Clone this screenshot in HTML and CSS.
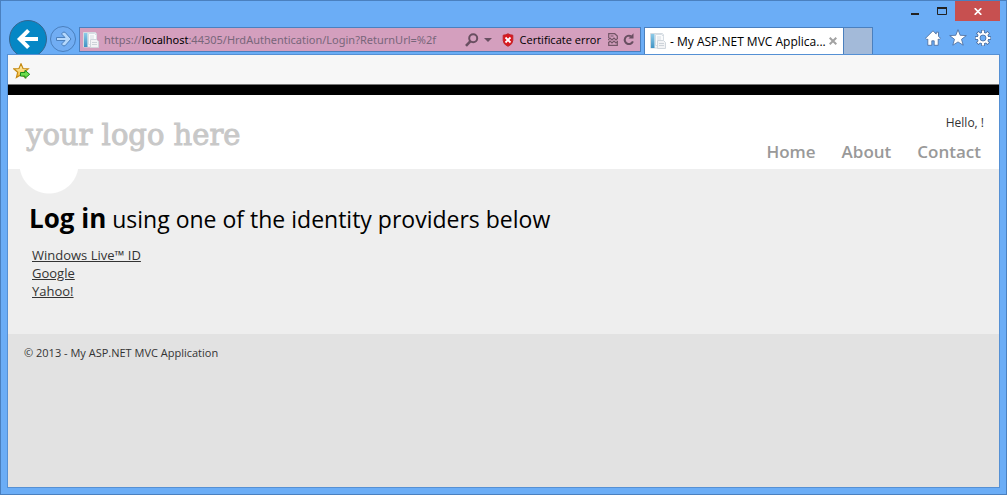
FILE: index.html
```
<!DOCTYPE html>
<html lang="en">
<head>
<meta charset="utf-8">
<title>- My ASP.NET MVC Application</title>
<link rel="stylesheet" href="styles.css">
</head>
<body>
<svg class="defs" aria-hidden="true">
  <defs>
    <linearGradient id="strip" x1="0" y1="0" x2="0" y2="1"><stop offset="0" stop-color="#8ccbe8"/><stop offset="1" stop-color="#3f93c4"/></linearGradient>
    <linearGradient id="gold" x1="0" y1="0" x2="0" y2="1"><stop offset="0" stop-color="#fff9c8"/><stop offset="1" stop-color="#f5b52c"/></linearGradient>
    <symbol id="page-icon" viewBox="0 0 16 16">
      <path d="M.5.5h12l1 1.500v13H.5z" fill="#f3f5f7" stroke="#d3dae0"/>
      <path d="M1 1h3.500v14H1z" fill="url(#strip)"/>
      <path d="M5.500 1.500h6l2 2v9h-8z" fill="#fafbfc" stroke="#d6dde3"/>
      <path d="M7 4h4M7 6h4" stroke="#d6dce2"/>
      <path d="M7.500 7.500h6l2 2v6h-8z" fill="#f2f3f5" stroke="#d0d6dc"/>
      <path d="M9 10.500h5M9 12.500h5" stroke="#cdd3d9"/>
    </symbol>
  </defs>
</svg>
<div class="window">
  <header class="chrome">
    <button class="back" aria-label="Back">
      <svg width="38" height="38" viewBox="0 0 38 38"><circle cx="19" cy="19" r="18.500" fill="#0587c5" stroke="#35658f"/><path d="M29 19H11M19.500 10.300 10.800 19l8.700 8.700" fill="none" stroke="#fff" stroke-width="4"/></svg>
    </button>
    <button class="forward" aria-label="Forward">
      <svg width="26" height="26" viewBox="0 0 26 26"><circle cx="13" cy="13" r="12.500" fill="#71adf3" stroke="#4a7fbd"/><path d="M6.500 11.500h8.500l-3.500-3.500 1.500-1.800h2l6 6.800-6 6.800h-2l-1.500-1.800 3.500-3.500h-8.500z" fill="#b5d8fc" stroke="#4b80bd"/></svg>
    </button>
    <div class="address">
      <svg class="favicon" width="16" height="16"><use href="#page-icon"/></svg>
      <div class="url" role="textbox" aria-label="Address" contenteditable="true" spellcheck="false">https://<span class="host">localhost</span>:44305/HrdAuthentication/Login?ReturnUrl=%2f</div>
      <button class="tool search" aria-label="Search"><svg width="14" height="14" viewBox="0 0 14 14"><circle cx="8.200" cy="5.300" r="4" fill="none" stroke="#694f61" stroke-width="2"/><path d="M5.500 8.200 1 12.800" stroke="#694f61" stroke-width="2.600"/></svg></button>
      <button class="tool drop" aria-label="Show address bar autocomplete"><svg width="8" height="4" viewBox="0 0 8 4"><path d="M0 0h8L4 4z" fill="#694f61"/></svg></button>
      <button class="tool cert"><svg width="12" height="14" viewBox="0 0 12 14"><path d="M6 .8Q3.500 2.200 1.200 2.200v5.300Q1.200 11.300 6 13.300q4.800-2 4.800-5.800V2.200Q8.500 2.200 6 .8z" fill="#d91920" stroke="#c0252b"/><path d="m3.500 4.500 5 5m0-5-5 5" stroke="#fff" stroke-width="1.800"/></svg>Certificate error</button>
      <button class="tool compat" aria-label="Compatibility View"><svg width="10" height="13" viewBox="0 0 10 13"><path d="M.7 5V.7h6L9.300 3v2M.7 9v3.300h8.600V9M2.500 3h3" fill="none" stroke="#735667" stroke-width="1.200"/><path d="m0 7 2-2 2 2 2-2 2 2 2-2M0 10l2-2 2 2 2-2 2 2 2-2" fill="none" stroke="#735667" stroke-width="1.200"/></svg></button>
      <button class="tool refresh" aria-label="Refresh"><svg width="12" height="13" viewBox="0 0 12 13"><path d="M8 3.200A4.200 4.200 0 1 0 9.900 8.300" fill="none" stroke="#694f61" stroke-width="2"/><path d="M5.500 5.500h5V.3z" fill="#694f61"/></svg></button>
    </div>
    <div class="tab">
      <svg class="favicon" width="16" height="16"><use href="#page-icon"/></svg>
      <span class="tab-title">- My ASP.NET MVC Applica...</span>
      <button class="tab-close" aria-label="Close tab"><svg width="8" height="8" viewBox="0 0 8 8"><path d="m.7.7 6.600 6.600m0-6.600L.7 7.300" stroke="#a2a2a2" stroke-width="2"/></svg></button>
    </div>
    <button class="new-tab" aria-label="New tab"></button>
    <div class="corner">
      <div class="controls">
        <button class="control" aria-label="Minimize"><svg width="10" height="10" viewBox="0 0 10 10"><path d="M1 7h8v2H1z" fill="#222"/></svg></button>
        <button class="control" aria-label="Maximize"><svg width="10" height="8" viewBox="0 0 10 8"><path d="M.5 0v7.500h9V0" fill="none" stroke="#222"/><path d="M0 0h10v2H0z" fill="#222"/></svg></button>
        <button class="control close" aria-label="Close"><svg width="8" height="7" viewBox="0 0 8 7"><path d="m.7.2 6.600 6.600m0-6.600L.7 6.800" stroke="#fff" stroke-width="1.700"/></svg></button>
      </div>
      <div class="commands">
        <button aria-label="Home"><svg width="16" height="16" viewBox="0 0 16 16"><path d="M8 .8.5 8.300 2 9.700l.8-.7v6.300h4v-4.500h2.400v4.500h4V9l.8.7 1.500-1.400-2-2V2.200h-2.300v1.900z" fill="#fff" stroke="#46689a" stroke-width=".8"/></svg></button>
        <button aria-label="Favorites"><svg width="18" height="17" viewBox="0 0 18 17"><path d="m9 .7 2.200 5.600 6.100.3-4.800 3.700 1.700 5.900L9 12.900l-5.200 3.300 1.700-5.900L.7 6.600l6.100-.3z" fill="#fff" stroke="#46689a" stroke-width=".8"/></svg></button>
        <button aria-label="Tools"><svg width="16" height="16" viewBox="0 0 16 16"><g stroke="#46689a" stroke-width="3.600"><path d="M8 0v16M0 8h16M2.300 2.300l11.400 11.400M13.700 2.300 2.300 13.700"/></g><circle cx="8" cy="8" r="6" fill="#46689a"/><g stroke="#fff" stroke-width="2.200"><path d="M8 .6v14.800M.6 8h14.800M2.800 2.800l10.400 10.400M13.200 2.800 2.800 13.200"/></g><circle cx="8" cy="8" r="5.300" fill="#fff"/><circle cx="8" cy="8" r="3" fill="#6badf6" stroke="#46689a" stroke-width=".8"/></svg></button>
      </div>
    </div>
  </header>
  <div class="viewport">
    <div class="favorites">
      <button aria-label="Add to Favorites bar"><svg width="18" height="16" viewBox="0 0 18 16"><path d="m8 .8 2 4.700 5.300.3-4 3.500 1.300 5.200L8 11.800l-4.600 2.700 1.300-5.200-4-3.500L6 5.500z" fill="url(#gold)" stroke="#c58a13" stroke-width="1.200"/><path d="M7.500 9.500H12V7.300l4.700 4-4.700 4v-2.200H7.500z" fill="#6cdd4c" stroke="#188c1c"/></svg></button>
    </div>
    <div class="site-header">
      <a class="logo" href="#">your logo here</a>
      <div class="site-menu">
        <p class="greeting">Hello, !</p>
        <nav class="nav"><a href="#">Home</a><a href="#">About</a><a href="#">Contact</a></nav>
      </div>
    </div>
    <main class="main">
      <h1><strong>Log in</strong> using one of the identity providers below</h1>
      <ul class="providers">
        <li><a href="#">Windows Live™ ID</a></li>
        <li><a href="#">Google</a></li>
        <li><a href="#">Yahoo!</a></li>
      </ul>
    </main>
    <footer class="footer">© 2013 - My ASP.NET MVC Application</footer>
  </div>
</div>
</body>
</html>
```
FILE: styles.css
```
* { box-sizing: border-box; }
body, h1, p, ul { margin: 0; padding: 0; }
body { font-family: "Open Sans", "Noto Sans", sans-serif; font-size: 12px; color: #333; }
ul { list-style: none; }
svg { display: block; flex: none; }
button { display: flex; align-items: center; justify-content: center; flex: none; margin: 0; padding: 0; border: 0; background: none; color: inherit; font: inherit; }
.defs { position: absolute; width: 0; height: 0; }

.window { display: flex; flex-direction: column; min-height: 100vh; padding: 0 6px 6px; border: 1px solid #4a80bf; background: #6badf6; }

.chrome { display: flex; align-items: flex-start; height: 53px; overflow: hidden; color: #000; }
.back { margin: 19px 0 0 2px; }
.forward { margin: 25px 3px 0; }
.address { display: flex; align-items: center; flex: 1; min-width: 0; height: 25px; margin: 26px 3px 0 0; padding: 0 5px 0 3px; border: 1px solid #4a80bf; background: #d49fbe; }
.url { flex: 1; min-width: 0; margin-left: 5px; overflow: hidden; white-space: nowrap; color: #78667a; font-family: "Noto Sans", sans-serif; font-size: 11px; outline: 0; }
.host { color: #000; }
.search { margin-right: 5px; }
.drop { margin-right: 10px; }
.cert { gap: 6px; margin-right: 7px; font-size: 11px; }
.compat { margin-right: 5px; }
.tab { display: flex; align-items: center; width: 200px; height: 27px; margin-top: 26px; padding: 0 6px 0 5px; border: 1px solid #4a80bf; border-bottom: 0; background: #fff; }
.tab-title { flex: 1; margin-left: 4px; white-space: nowrap; font-size: 12px; }
.new-tab { width: 29px; height: 27px; margin-top: 26px; border: 1px solid #4a80bf; border-width: 1px 1px 0 0; background: #a3bad9; }
.corner { width: 127px; }
.controls { display: flex; justify-content: flex-end; }
.control { width: 27px; height: 20px; }
.close { width: 45px; background: #c75050; }
.commands { display: flex; align-items: center; justify-content: flex-end; gap: 8px; padding: 8px 9px 0 0; }

.viewport { display: flex; flex: 1; flex-direction: column; border: 1px solid #5590d4; background: #e2e2e2; }
.favorites { display: flex; align-items: center; height: 30px; padding: 2px 5px 0; border-bottom: 1px solid #777; background: #f7f7f7; }
.site-header { display: flex; justify-content: space-between; border-top: 10px solid #000; padding: 0 15px 4px 18px; background: #fff; }
.logo { margin-top: 20px; color: #c8c8c8; font: 29px/40px "DejaVu Serif", serif; text-decoration: none; -webkit-text-stroke: 1px #c8c8c8; }
.greeting { padding-top: 18px; font-size: 12px; line-height: 20px; text-align: right; }
.nav { display: flex; justify-content: flex-end; gap: 26px; padding: 6px 3px 0 0; }
.nav a { color: #999; font-size: 17px; font-weight: 600; line-height: 26px; text-decoration: none; }
.main { height: 165px; padding: 31px 21px 0; background: radial-gradient(circle at 41px -5px, #fff 29px, #eee 30px); }
h1 { color: #000; font-size: 23px; font-weight: 400; line-height: 36px; }
h1 strong { font-size: 26px; font-weight: 700; }
.providers { padding: 9px 3px 0; font-size: 13px; line-height: 18px; }
.providers a { color: #333; }
.footer { padding: 10px 16px; font-size: 11px; line-height: 18px; }
```
